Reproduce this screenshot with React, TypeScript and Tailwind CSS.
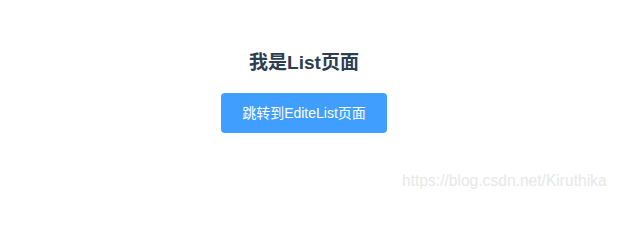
export default function App() {
  return (
    <div
      className="relative h-[200px] w-[619px] bg-white"
      style={{ fontFamily: '"Liberation Sans", Arial, "Noto Sans CJK SC", sans-serif' }}
    >
      <main className="flex flex-col items-center pr-[11px] pt-[50px]">
        <h2 className="text-[19px] font-bold leading-[25px] text-[#2c3e50]">我是List页面</h2>
        <button className="mt-[18px] h-[40px] w-[166px] rounded-[4px] bg-[#409eff] text-[14px] text-white">
          跳转到EditeList页面
        </button>
      </main>
      <span className="absolute left-[402px] top-[171px] text-[15.6px] leading-[20px] text-[#e8e8e8]">
        https://blog.csdn.net/Kiruthika
      </span>
    </div>
  );
}
